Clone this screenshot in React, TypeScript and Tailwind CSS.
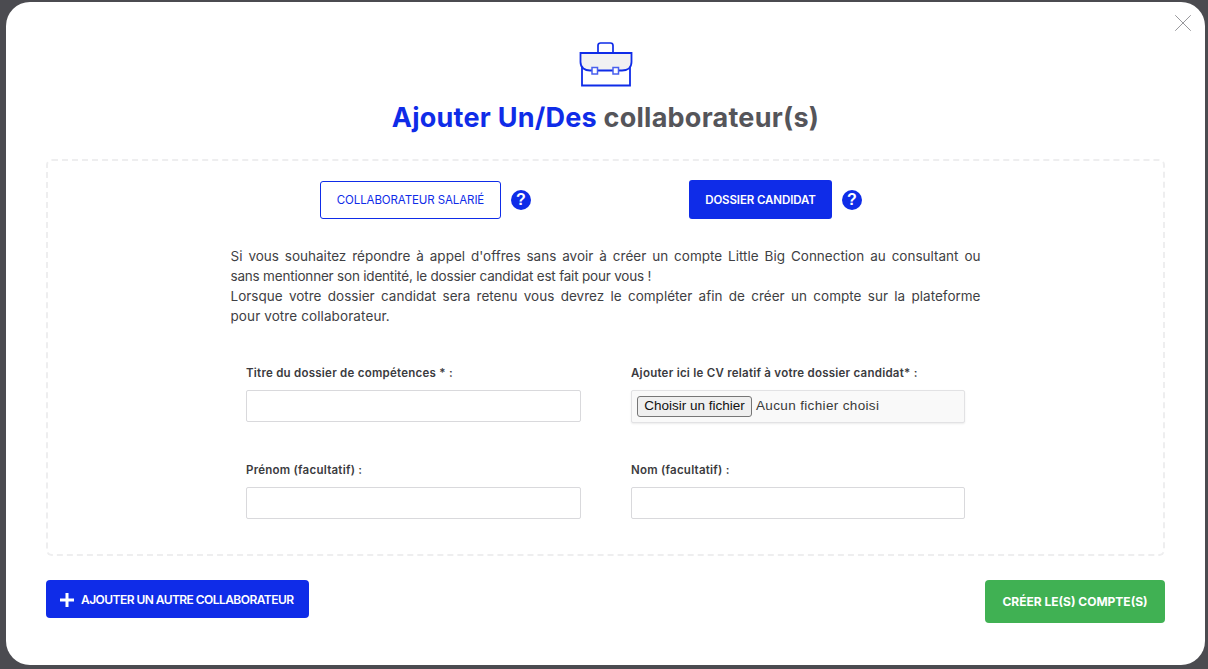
import { X } from "lucide-react";

const font = "font-['Inter','Liberation_Sans',sans-serif]";

function BriefcaseIcon() {
  return (
    <svg width="54" height="46" viewBox="0 0 54 46" fill="none" className="block">
      <path d="M1.500 12H52.500V21C52.500 27 48 29.500 43 29.500H11C6 29.500 1.500 27 1.500 21Z" fill="#f1f1f2" stroke="#0f2ce8" strokeWidth="1.800" />
      <path d="M3 26V44.500H51V26" stroke="#0f2ce8" strokeWidth="1.800" />
      <path d="M19 11V4.500C19 3 20 2 21.500 2H31.500C33 2 34 3 34 4.500V11" stroke="#0f2ce8" strokeWidth="1.700" />
      <rect x="13" y="26.500" width="5.500" height="6.500" fill="#ffffff" stroke="#4a60ee" strokeWidth="1.500" />
      <rect x="34" y="26.500" width="5.500" height="6.500" fill="#ffffff" stroke="#4a60ee" strokeWidth="1.500" />
    </svg>
  );
}

function HelpBadge() {
  return (
    <span className="flex h-5 w-5 items-center justify-center rounded-full bg-[#0f2ce8] font-['Liberation_Sans',sans-serif] text-[16px] font-bold leading-none text-white">
      ?
    </span>
  );
}

function Field({ label, children }: { label: string; children?: React.ReactNode }) {
  return (
    <div className="flex flex-col">
      <label className="mb-[9px] h-[15px] text-[11.5px] font-semibold leading-[15px] tracking-[0.25px] text-[#3b3b40]">
        {label}
      </label>
      {children ?? (
        <input
          type="text"
          className="h-[32px] w-full rounded-[2px] border border-[#d9d9dc] bg-white outline-none"
        />
      )}
    </div>
  );
}

export default function App() {
  return (
    <div className={`${font} h-[669px] w-[1208px] overflow-hidden bg-[#4b4b50] pb-[4px] pl-[6px] pr-[3px] pt-[2px]`}>
      <div className="relative flex h-full flex-col rounded-[24px] bg-white px-[40px]">
        {/* close */}
        <button className="absolute right-[7px] top-[6px] text-[#98989c]">
          <X size={30} strokeWidth={0.800} />
        </button>

        {/* Header */}
        <div className="flex flex-col items-center pt-[39px]">
          <BriefcaseIcon />
          <h1 className="mt-[13px] text-[27px] font-bold leading-[36px] tracking-[0.25px] text-[#55555a]">
            <span className="text-[#0f2ce8]">Ajouter Un/Des</span> collaborateur(s)
          </h1>
        </div>

        {/* Dashed form panel */}
        <div className="mt-[23px] h-[397px] rounded-[6px] border-2 border-dashed border-[#eeeeef] pt-[19px]">
          <div className="flex pl-[272px]">
            <div className="flex items-center gap-[10px]">
              <button className="flex h-[38px] w-[181px] items-center justify-center rounded-[3px] border border-[#0f2ce8] bg-white pt-[2px] text-[11.5px] font-normal tracking-[-0.1px] text-[#0f2ce8]">
                COLLABORATEUR SALARIÉ
              </button>
              <HelpBadge />
            </div>
            <div className="ml-[158px] flex items-center gap-[10px]">
              <button className="flex h-[39px] w-[143px] items-center justify-center rounded-[3px] bg-[#0f2ce8] pt-[2px] text-[11.5px] font-semibold tracking-[-0.1px] text-white">
                DOSSIER CANDIDAT
              </button>
              <HelpBadge />
            </div>
          </div>

          <div className="mx-auto mt-[27px] w-[750px] text-[13.5px] leading-[20px] text-[#3f3f44]">
            <p className="text-justify [text-align-last:justify]">
              Si vous souhaitez répondre à appel d'offres sans avoir à créer un compte Little Big Connection au consultant ou
            </p>
            <p className="tracking-[-0.2px]">
              sans mentionner son identité, le dossier candidat est fait pour vous !
            </p>
            <p className="text-justify [text-align-last:justify]">
              Lorsque votre dossier candidat sera retenu vous devrez le compléter afin de créer un compte sur la plateforme
            </p>
            <p className="tracking-[0.1px]">pour votre collaborateur.</p>
          </div>

          <div className="ml-[198px] mt-[40px] grid w-[719px] grid-cols-[335px_334px] gap-x-[50px] gap-y-[40px]">
            <Field label="Titre du dossier de compétences * :" />
            <Field label="Ajouter ici le CV relatif à votre dossier candidat* :">
              <div className="flex h-[33px] w-full items-center rounded-[2px] border border-[#e2e2e4] bg-[#f9f9f9] pl-[5px] font-['Liberation_Sans',sans-serif] text-[13.500px] text-[#3a3a3a] shadow-[0_1px_2px_rgba(0,0,0,0.08)]">
                <span className="flex h-[21px] w-[115px] items-center justify-center rounded-[3px] border border-[#767676] bg-[#efefef] text-[#111111]">
                  Choisir un fichier
                </span>
                <span className="ml-[4px] tracking-[0.35px]">Aucun fichier choisi</span>
              </div>
            </Field>
            <Field label="Prénom (facultatif) :" />
            <Field label="Nom (facultatif) :" />
          </div>
        </div>

        {/* Footer actions */}
        <div className="mt-[24px] flex items-start justify-between">
          <button className="flex h-[38px] w-[263px] items-center gap-[7px] rounded-[4px] bg-[#0f2ce8] pl-[14px] pt-[1px] text-[12px] font-semibold tracking-[-0.55px] text-white">
            <svg width="14" height="14" viewBox="0 0 14 14" fill="white">
              <path d="M5.500 0H8.500V5.500H14V8.500H8.500V14H5.500V8.500H0V5.500H5.500Z" />
            </svg>
            AJOUTER UN AUTRE COLLABORATEUR
          </button>
          <button className="flex h-[43px] w-[180px] items-center justify-center rounded-[4px] bg-[#40b153] text-[12px] font-bold text-white">
            CRÉER LE(S) COMPTE(S)
          </button>
        </div>
      </div>
    </div>
  );
}
